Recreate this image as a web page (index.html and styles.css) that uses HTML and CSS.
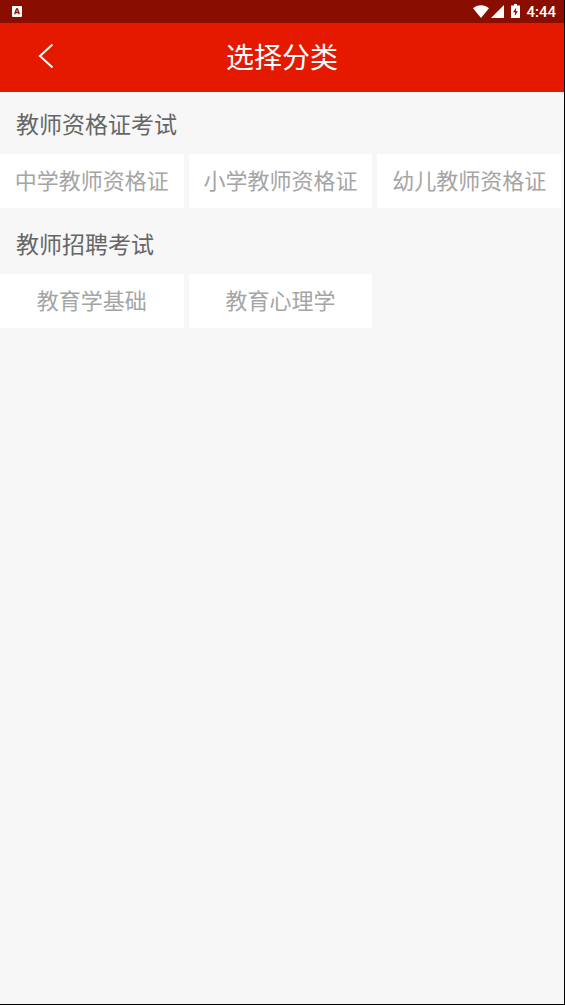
FILE: index.html
```html
<!DOCTYPE html>
<html lang="zh-CN">
<head>
    <meta charset="UTF-8">
    <meta name="viewport" content="width=device-width, initial-scale=1.0">
    <title>选择分类</title>
    <link rel="stylesheet" href="styles.css">
</head>
<body>
    <div class="status-bar">
        <svg class="app-icon" width="10" height="11" viewBox="0 0 10 11">
            <rect width="10" height="11" rx="1" fill="#fff"/>
            <path d="M2.700 8.200L4.500 3h1L7.300 8.200M3.500 6.500h3" fill="none" stroke="#8a0e00" stroke-width="1.300"/>
        </svg>
        <div class="status-right">
            <svg width="16" height="13" viewBox="0 0 16 13">
                <path d="M0 3.200C4.500-.8 11.500-.8 16 3.200L8 13z" fill="#fff"/>
            </svg>
            <svg width="13" height="13" viewBox="0 0 13 13">
                <path d="M13 0v13H0z" fill="#fff"/>
            </svg>
            <svg class="battery" width="9" height="14" viewBox="0 0 9 14">
                <path d="M3 0h3v1.500h3V14H0V1.500h3z" fill="#fff"/>
                <path d="M5.300 3.500L2 8.300h2.200L3.700 12 7 7.200H4.800z" fill="#8a0e00"/>
            </svg>
            <span class="time">4:44</span>
        </div>
    </div>

    <header class="header">
        <button class="back" type="button" aria-label="返回">
            <svg width="16" height="26" viewBox="0 0 16 26">
                <path d="M14.500 1.500L2 13l12.500 11.500" fill="none" stroke="#fff" stroke-width="2"/>
            </svg>
        </button>
        <h1>选择分类</h1>
    </header>

    <main class="content">
        <section class="group">
            <h2>教师资格证考试</h2>
            <div class="options">
                <button type="button">中学教师资格证</button>
                <button type="button">小学教师资格证</button>
                <button type="button">幼儿教师资格证</button>
            </div>
        </section>
        <section class="group">
            <h2>教师招聘考试</h2>
            <div class="options">
                <button type="button">教育学基础</button>
                <button type="button">教育心理学</button>
            </div>
        </section>
    </main>
</body>
</html>
```
FILE: styles.css
```css
* {
    box-sizing: border-box;
}
body {
    font-family: "Noto Sans CJK SC", sans-serif;
    background-color: #f7f7f7;
    margin: 0;
    min-height: 100vh;
    border-right: 1px solid #000;
    border-bottom: 1px solid #000;
}
.status-bar {
    display: flex;
    justify-content: space-between;
    align-items: center;
    height: 23px;
    padding: 0 8px 0 12px;
    background-color: #8a0e00;
}
.status-right {
    display: flex;
    align-items: center;
    gap: 2px;
}
.battery {
    margin: 0 4px 2px 5px;
}
.time {
    font-family: Roboto, sans-serif;
    font-size: 15px;
    font-weight: 500;
    line-height: 24px;
    color: #fff;
}
.header {
    display: grid;
    grid-template-columns: 92px 1fr 92px;
    align-items: center;
    height: 69px;
    padding-bottom: 3px;
    background-color: #e51900;
}
.back {
    display: flex;
    justify-content: center;
    align-items: center;
    height: 100%;
    padding: 0;
    border: none;
    background: none;
    cursor: pointer;
}
.header h1 {
    margin: 0;
    font-size: 28px;
    font-weight: 400;
    line-height: 40px;
    text-align: center;
    color: #fff;
}
.group {
    padding-bottom: 4px;
}
.group h2 {
    margin: 0;
    padding: 0 16px;
    font-size: 23px;
    font-weight: 400;
    line-height: 62px;
    color: #666;
}
.options {
    display: grid;
    grid-template-columns: repeat(3, 1fr);
    gap: 5px;
    padding-right: 3px;
}
.options button {
    height: 54px;
    padding: 0 0 4px;
    border: none;
    background-color: #fff;
    font-family: inherit;
    font-size: 22px;
    color: #a5a5a5;
    cursor: pointer;
}
```
